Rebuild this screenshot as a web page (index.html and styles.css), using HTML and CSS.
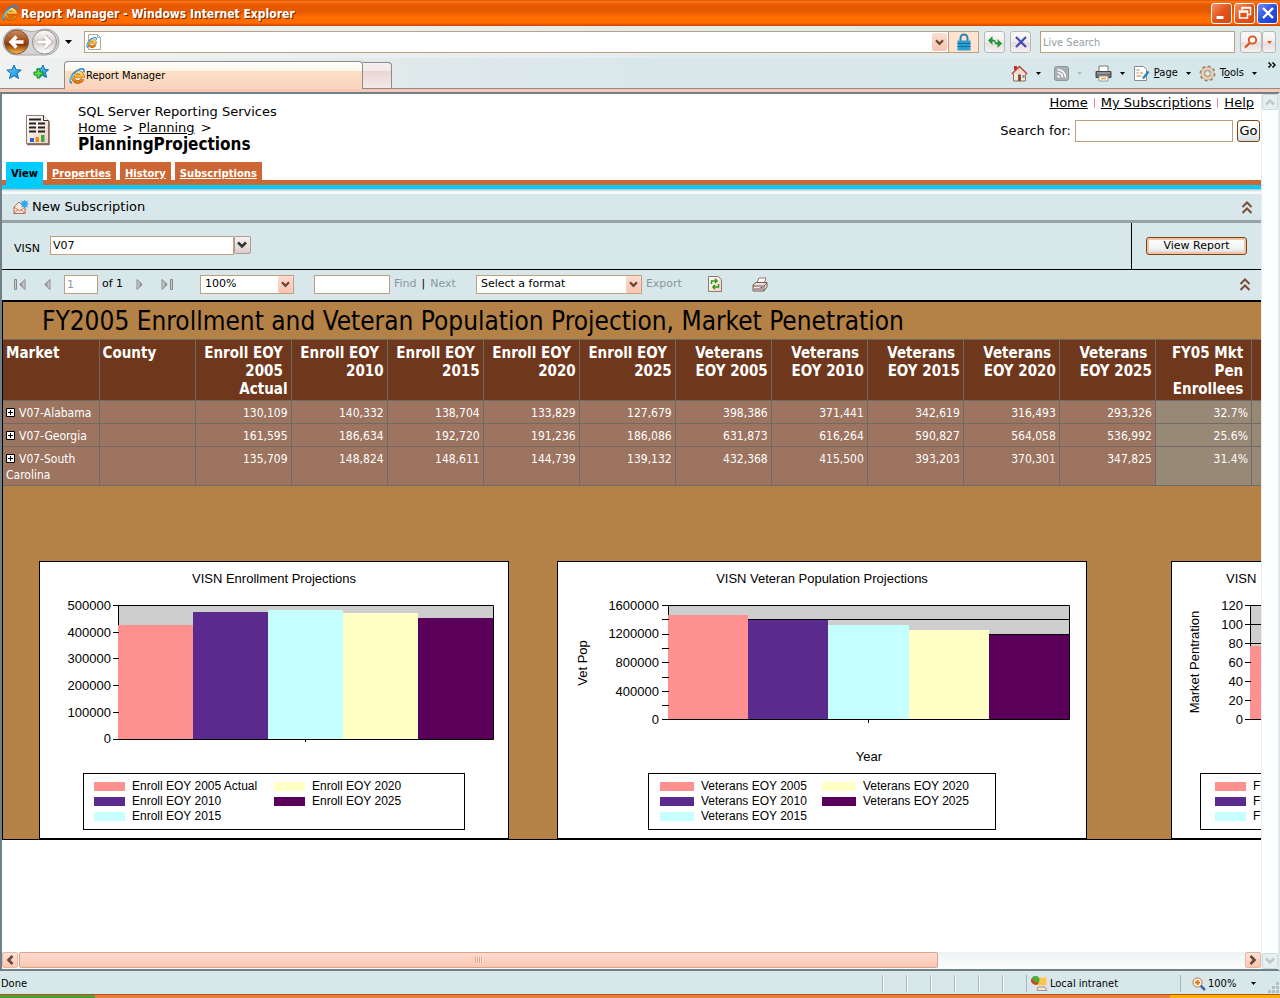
FILE: index.html
```html
<!DOCTYPE html>
<html lang="en">
<head>
<meta charset="utf-8">
<title>Report Manager - Windows Internet Explorer</title>
<link rel="stylesheet" href="styles.css">
</head>
<body>
<svg class="defs" aria-hidden="true">
  <defs>
    <linearGradient id="amber" x1="0" y1="0" x2="0" y2="1"><stop offset="0" stop-color="#ffe08a"/><stop offset=".5" stop-color="#f9a825"/><stop offset="1" stop-color="#d87808"/></linearGradient>
    <linearGradient id="backfill" x1="0" y1="0" x2="0" y2="1"><stop offset="0" stop-color="#c98a62"/><stop offset=".45" stop-color="#a2501c"/><stop offset=".6" stop-color="#8a3706"/><stop offset="1" stop-color="#ffc14a"/></linearGradient>
    <linearGradient id="fwdfill" x1="0" y1="0" x2="0" y2="1"><stop offset="0" stop-color="#fdfdfd"/><stop offset=".5" stop-color="#d9cfcb"/><stop offset="1" stop-color="#ffffff"/></linearGradient>
    <linearGradient id="blue" x1="0" y1="0" x2="1" y2="1"><stop offset="0" stop-color="#6fd4ff"/><stop offset="1" stop-color="#0a84d8"/></linearGradient>
    <linearGradient id="paper" x1="0" y1="0" x2="1" y2="1"><stop offset="0" stop-color="#ffffff"/><stop offset="1" stop-color="#f0cfc0"/></linearGradient>
    <linearGradient id="metal" x1="0" y1="0" x2="1" y2="0"><stop offset="0" stop-color="#777"/><stop offset="1" stop-color="#e2e2e2"/></linearGradient>
    <symbol id="ie" viewBox="0 0 16 16">
      <path d="M13.600 11A5 5 0 1 1 13.800 7.800H6" fill="none" stroke="#9a5200" stroke-width="3.400"/>
      <path d="M13.600 11A5 5 0 1 1 13.800 7.800H6" fill="none" stroke="url(#amber)" stroke-width="2.600"/>
      <path d="M3 15C.2 14.600.8 10.200 4.400 6 8 1.800 12.800-.2 14.500 1.300c.7.7.6 1.800.2 3" fill="none" stroke="#1f8fdc" stroke-width="1.700"/>
      <path d="M1.600 13C1.400 10.800 3 8 5 5.800" fill="none" stroke="#7fd6ff" stroke-width="1"/>
    </symbol>
    <symbol id="caret" viewBox="0 0 7 4"><path d="M0 0h7L3.500 4z"/></symbol>
    <symbol id="chev" viewBox="0 0 10 8"><path d="M1 1.500l4 4 4-4" fill="none" stroke="currentColor" stroke-width="2.600"/></symbol>
    <symbol id="dblup" viewBox="0 0 12 13"><path d="M1.500 6L6 1.500 10.500 6M1.500 12L6 7.500 10.500 12" fill="none" stroke="#7a4b35" stroke-width="2"/></symbol>
    <symbol id="tri" viewBox="0 0 7 11"><path d="M6 .5v10L.8 5.500z" fill="url(#metal)" stroke="#888"/></symbol>
    <symbol id="plus" viewBox="0 0 9 9"><path d="M.5.5h8v8h-8z" fill="#fff" stroke="#000"/><path d="M2 4.500h5M4.500 2v5" stroke="#000"/></symbol>
  </defs>
</svg>

<header class="titlebar">
  <svg class="i16"><use href="#ie"/></svg>
  <h1>Report Manager - Windows Internet Explorer</h1>
  <button class="win" aria-label="Minimize"><svg viewBox="0 0 20 20"><path d="M4.500 14.500h7" stroke="#fff" stroke-width="3"/></svg></button>
  <button class="win" aria-label="Restore"><svg viewBox="0 0 20 20"><path d="M7 7V4.500h8.500v7H13M4.500 8h8v7h-8zM4.500 9h8M7 5h8" fill="none" stroke="#fff" stroke-width="1.500"/></svg></button>
  <button class="win close" aria-label="Close"><svg viewBox="0 0 20 20"><path d="M5 5l10 10M15 5L5 15" stroke="#fff" stroke-width="2.400"/></svg></button>
</header>

<nav class="navbar">
  <button class="travel" aria-label="Back and forward">
    <svg width="58" height="28" viewBox="0 0 58 28">
      <path d="M14 1C22 1 24 3.500 30 3.500S38 1 44 1a13 13 0 0 1 0 26H14A13 13 0 0 1 14 1z" fill="#d3d3d3" stroke="#a9a9a9"/>
      <circle cx="14.500" cy="14" r="12" fill="url(#backfill)" stroke="#7c5a44"/>
      <path d="M21.500 14H9.500M14.500 8.500L9 14l5.500 5.500" fill="none" stroke="#fff" stroke-width="3.400"/>
      <circle cx="42.500" cy="14" r="12" fill="url(#fwdfill)" stroke="#8f8f8f"/>
      <path d="M35.500 14h12M42.500 8.500L48 14l-5.500 5.500" fill="none" stroke="#b5aaa6" stroke-width="4.600"/>
      <path d="M35.500 14h12M42.500 8.500L48 14l-5.500 5.500" fill="none" stroke="#fff" stroke-width="3"/>
    </svg>
  </button>
  <button class="bare" aria-label="Recent pages"><svg class="caret"><use href="#caret"/></svg></button>
  <div class="address">
    <svg class="i18" viewBox="0 0 18 18"><path d="M3.500 1.500h9l3 3v12h-12z" fill="#fff" stroke="#aaa"/><path d="M12.500 1.500v3h3" fill="none" stroke="#aaa"/><svg x="1" y="4" width="11" height="11"><use href="#ie"/></svg></svg>
    <input type="text" aria-label="Address">
    <button class="drop" aria-label="Show address list"><svg class="chev"><use href="#chev"/></svg></button>
    <button class="lock" aria-label="Security report"><svg width="14" height="18" viewBox="0 0 14 18"><path d="M3.500 9V5a3.500 3.500 0 0 1 7 0v4" fill="none" stroke="#2b83ad" stroke-width="2"/><path d="M.5 7.500h13v10H.5z" fill="#2a9fd2"/><path d="M.5 10.500h13M.5 13.500h13" stroke="#1570a0"/></svg></button>
  </div>
  <button class="sq" aria-label="Refresh"><svg width="16" height="14" viewBox="0 0 16 14"><path d="M4 5.500h2.500c1 0 1.300.5 1.300 1.500M12 8.500H9.800c-1 0-1.300-.5-1.300-1.500" fill="none" stroke="#22963a" stroke-width="2"/><path d="M1 5.500L5.500 1v9zM15 8.500L10.500 13V4z" fill="#22963a"/></svg></button>
  <button class="sq" aria-label="Stop"><svg width="12" height="12" viewBox="0 0 12 12"><path d="M1 1l10 10M11 1L1 11" stroke="#4149bb" stroke-width="2.200"/></svg></button>
  <input class="live" type="text" placeholder="Live Search" aria-label="Live Search">
  <div class="go-pair">
    <button class="sq" aria-label="Search"><svg width="14" height="14" viewBox="0 0 14 14"><circle cx="8.500" cy="5" r="3.700" fill="#fff" stroke="#dc5316" stroke-width="1.800"/><path d="M5.700 8L1 12.500" stroke="#dc5316" stroke-width="2.200"/></svg></button>
    <button class="sq slim" aria-label="Search options"><svg class="caret sm orange"><use href="#caret"/></svg></button>
  </div>
</nav>

<div class="tabsbar">
  <div class="favs">
    <button class="bare" aria-label="Favorites"><svg width="16" height="16" viewBox="0 0 16 16"><path d="M8 1l2 4.700 5.200.4-4 3.400 1.300 5L8 11.800l-4.500 2.700 1.300-5-4-3.400L6 5.700z" fill="url(#blue)" stroke="#0e70b8"/></svg></button>
    <button class="bare" aria-label="Add to favorites"><svg width="16" height="16" viewBox="0 0 16 16"><path d="M10 1l1.500 4.200 4 .5-3 3 1 4.800-4-2L5 13l1-5-2.500-3 4.500-.2z" fill="url(#blue)" stroke="#0e70b8"/><path d="M4 5h3v3h3v3H7v3H4v-3H1V8h3z" fill="#5fdc4f" stroke="#128a1c"/></svg></button>
  </div>
  <button class="tab"><svg class="i16"><use href="#ie"/></svg>Report Manager</button>
  <button class="newtab" aria-label="New tab"></button>
  <div class="commands">
    <button class="bare" aria-label="Home"><svg width="17" height="17" viewBox="0 0 17 17"><path d="M3 1h3v4H3z" fill="#c72b20"/><path d="M2.500 8h12v8h-12z" fill="#f5e8dd" stroke="#8e6e5c"/><path d="M.8 9L8.500 1.500 16.200 9" fill="#f3d9cb" stroke="#b54a3a" stroke-width="1.500"/><path d="M7 9.500h3V16H7z" fill="#8b4b2e"/><path d="M11.500 10h2v3h-2z" fill="#7894a8"/></svg></button>
    <button class="bare" aria-label="Home menu"><svg class="caret sm"><use href="#caret"/></svg></button>
    <button class="bare rss" aria-label="Feeds"><svg width="15" height="15" viewBox="0 0 15 15"><rect x=".5" y=".5" width="14" height="14" rx="2" fill="#a9aeb0" stroke="#8f9698"/><circle cx="4.500" cy="10.500" r="1.300" fill="#fff"/><path d="M3.500 6.500a5 5 0 0 1 5 5M3.500 3.500a8 8 0 0 1 8 8" fill="none" stroke="#fff" stroke-width="1.600"/></svg></button>
    <button class="bare" aria-label="Feeds menu"><svg class="caret sm dim"><use href="#caret"/></svg></button>
    <button class="bare print" aria-label="Print"><svg width="17" height="17" viewBox="0 0 17 17"><path d="M4 1h9v6H4z" fill="#fff" stroke="#777"/><path d="M1 6.500h15v6H1z" fill="#6f6f73" stroke="#454548"/><path d="M2 8h13" stroke="#bbb"/><path d="M4 11h9v5H4z" fill="#fff" stroke="#999"/><path d="M6 13.500h5" stroke="#e9b14b" stroke-width="2"/></svg></button>
    <button class="bare" aria-label="Print menu"><svg class="caret sm"><use href="#caret"/></svg></button>
    <button class="bare cmd"><svg width="17" height="17" viewBox="0 0 17 17"><path d="M1.500 1.500h9l3 3v11h-12z" fill="#fff" stroke="#8a8a8a"/><path d="M3.500 5h3M3.500 8h2M7 8h3M3.500 11h5" stroke="#c0764d"/><path d="M15.500 6.500l-5.500 7" stroke="#2b7fc0" stroke-width="2.200"/></svg><span><u>P</u>age</span><svg class="caret sm"><use href="#caret"/></svg></button>
    <button class="bare cmd"><svg width="17" height="17" viewBox="0 0 17 17"><circle cx="8.500" cy="8.500" r="6.800" fill="none" stroke="#9a7b5e" stroke-width="2.400" stroke-dasharray="2.670 2.670"/><circle cx="8.500" cy="8.500" r="5" fill="#f5ede3" stroke="#a88e74" stroke-width="3.600"/><circle cx="8.500" cy="8.500" r="5" fill="none" stroke="#e6d3bc" stroke-width="2.600"/><circle cx="8.500" cy="8.500" r="2.800" fill="#dfecee" stroke="#a88e74"/></svg><span>T<u>o</u>ols</span><svg class="caret sm"><use href="#caret"/></svg></button>
    <button class="bare more" aria-label="More"><svg width="8" height="6" viewBox="0 0 8 6"><path d="M.5.5L3 3 .5 5.500M4.500.5L7 3 4.500 5.500" fill="none" stroke="#000" stroke-width="1.500"/></svg></button>
  </div>
</div>

<div class="viewport">
  <main class="page">
    <header class="site">
      <svg class="logo" width="26" height="32" viewBox="0 0 26 32"><path d="M1.500 1.500h17l5 5v23h-22z" fill="url(#paper)" stroke="#8d7a70"/><path d="M24 7v23.500H2" fill="none" stroke="#8a6357" stroke-width="1.500"/><path d="M18.500 1.500v5h5" fill="#fff" stroke="#333"/><path d="M4 5.500h12M4 9.500h7M13 9.500h7M4 13.500h7M13 13.500h7M4 17.500h7M13 17.500h7" stroke="#222" stroke-width="1.800"/><path d="M5 24h4v4H5z" fill="#2b5fe0"/><path d="M10.500 23h3.500v5h-3.500z" fill="#e98a12"/><path d="M16 21h3.500v7H16z" fill="#37a83c"/></svg>
      <div class="crumbs">
        <p>SQL Server Reporting Services</p>
        <p><a href="#">Home</a> <span>&gt;</span> <a href="#">Planning</a> <span>&gt;</span></p>
        <h2>PlanningProjections</h2>
      </div>
      <div class="tools">
        <p class="links"><a href="#">Home</a><i></i><a href="#">My Subscriptions</a><i></i><a href="#">Help</a></p>
        <form class="find"><label for="q">Search for:</label><input id="q" type="text"><button type="button" class="push">Go</button></form>
      </div>
    </header>

    <nav class="sections">
      <a class="on" href="#">View</a><a href="#">Properties</a><a href="#">History</a><a href="#">Subscriptions</a>
    </nav>

    <div class="actions">
      <button class="bare sub"><svg width="16" height="16" viewBox="0 0 16 16"><path d="M1 8l5-5 6 5v6.500H1z" fill="#fbe9de" stroke="#b4654a"/><path d="M1 8l5.500 4L12 8M1 14.500l4-4M12 14.500l-4-4" fill="none" stroke="#c07055"/><path d="M11.500.5l1 2 2.500-1-1 2.500 2 1-2 1 1 2.500-2.500-1-1 2-1-2-2.500 1 1-2.500-2-1 2-1-1-2.500 2.500 1z" fill="#31a8ec"/></svg>New Subscription</button>
      <button class="bare" aria-label="Hide header"><svg class="dbl"><use href="#dblup"/></svg></button>
    </div>

    <form class="params">
      <div class="param"><label for="visn">VISN</label><div class="combo"><input id="visn" type="text" value="V07"><button type="button" aria-label="Choose VISN"><svg class="chev"><use href="#chev"/></svg></button></div></div>
      <div class="run"><button type="button" class="push view">View Report</button></div>
    </form>

    <div class="viewer-bar">
      <button class="bare first" aria-label="First page"><svg width="12" height="11" viewBox="0 0 12 11"><path d="M.5.5h2v10h-2z" fill="#ccc" stroke="#888"/><svg x="5" width="7" height="11"><use href="#tri"/></svg></svg></button>
      <button class="bare prev" aria-label="Previous page"><svg width="7" height="11"><use href="#tri"/></svg></button>
      <input class="pg" type="text" value="1" aria-label="Page"><span class="of">of 1</span>
      <button class="bare next" aria-label="Next page"><svg class="flip" width="7" height="11"><use href="#tri"/></svg></button>
      <button class="bare last" aria-label="Last page"><svg class="flip" width="12" height="11" viewBox="0 0 12 11"><path d="M.5.5h2v10h-2z" fill="#ccc" stroke="#888"/><svg x="5" width="7" height="11"><use href="#tri"/></svg></svg></button>
      <span class="sel zoomsel"><select aria-label="Zoom"><option>100%</option></select><b><svg class="chev"><use href="#chev"/></svg></b></span>
      <input class="ft" type="text" aria-label="Find text"><a class="off">Find</a><span class="bar">|</span><a class="off">Next</a>
      <span class="sel format"><select aria-label="Export format"><option>Select a format</option></select><b><svg class="chev"><use href="#chev"/></svg></b></span><a class="off">Export</a>
      <button class="bare reload" aria-label="Refresh report"><svg width="14" height="16" viewBox="0 0 14 16"><path d="M.5.5h10l3 3v12H.5z" fill="url(#paper)" stroke="#8d7a70"/><path d="M3.500 8V5h5M7 2.800L9 5 7 7M10.500 8v3h-5M7 9l-2 2 2 2.200" fill="none" stroke="#2d9a17" stroke-width="1.500"/></svg></button>
      <button class="bare prn" aria-label="Print report"><svg width="16" height="15" viewBox="0 0 16 15"><path d="M5 6l2-5h7l-2 6z" fill="#fff" stroke="#8d7a70"/><path d="M1 8l3-2.500h11V10l-3 4H1z" fill="#f1dfd6" stroke="#6e5a52"/><path d="M1 9h11l3-3M12 9v5M2 12h9" fill="none" stroke="#6e5a52"/><path d="M8.500 10h2v1h-2z" fill="#2b5fe0"/></svg></button>
      <button class="bare hide" aria-label="Hide parameters"><svg class="dbl"><use href="#dblup"/></svg></button>
    </div>

    <section class="report">
      <h3>FY2005 Enrollment and Veteran Population Projection, Market Penetration</h3>
      <table>
        <thead>
          <tr><th class="l">Market</th><th class="l">County</th><th>Enroll EOY&nbsp;<br>2005&nbsp;<br>Actual</th><th>Enroll EOY&nbsp;<br>2010</th><th>Enroll EOY&nbsp;<br>2015</th><th>Enroll EOY&nbsp;<br>2020</th><th>Enroll EOY&nbsp;<br>2025</th><th>Veterans&nbsp;<br>EOY 2005</th><th>Veterans&nbsp;<br>EOY 2010</th><th>Veterans&nbsp;<br>EOY 2015</th><th>Veterans&nbsp;<br>EOY 2020</th><th>Veterans&nbsp;<br>EOY 2025</th><th>FY05 Mkt&nbsp;<br>Pen&nbsp;<br>Enrollees&nbsp;</th><th></th></tr>
        </thead>
        <tbody>
          <tr><td class="l"><svg class="plus"><use href="#plus"/></svg>V07-Alabama</td><td></td><td>130,109</td><td>140,332</td><td>138,704</td><td>133,829</td><td>127,679</td><td>398,386</td><td>371,441</td><td>342,619</td><td>316,493</td><td>293,326</td><td class="pen">32.7%</td><td class="pen"></td></tr>
          <tr><td class="l"><svg class="plus"><use href="#plus"/></svg>V07-Georgia</td><td></td><td>161,595</td><td>186,634</td><td>192,720</td><td>191,236</td><td>186,086</td><td>631,873</td><td>616,264</td><td>590,827</td><td>564,058</td><td>536,992</td><td class="pen">25.6%</td><td class="pen"></td></tr>
          <tr><td class="l"><svg class="plus"><use href="#plus"/></svg>V07-South<br>Carolina</td><td></td><td>135,709</td><td>148,824</td><td>148,611</td><td>144,739</td><td>139,132</td><td>432,368</td><td>415,500</td><td>393,203</td><td>370,301</td><td>347,825</td><td class="pen">31.4%</td><td class="pen"></td></tr>
        </tbody>
      </table>

      <div class="charts">
        <figure class="chart c1">
          <figcaption>VISN Enrollment Projections</figcaption>
          <svg width="468" height="182" viewBox="40 592 468 182">
            <path d="M118.500 605.500h375v134h-375z" fill="#cecece" stroke="#000"/>
            <g><rect x="118" y="625" width="75" height="114" fill="#ff9090"/><rect x="193" y="612" width="75" height="127" fill="#5a2a8e"/><rect x="268" y="610" width="75" height="129" fill="#c6ffff"/><rect x="343" y="613" width="75" height="126" fill="#ffffc6"/><rect x="418" y="618" width="75" height="121" fill="#5a005a"/></g>
            <path d="M113 605.500h6M113 632.500h6M113 658.500h6M113 685.500h6M113 712.500h6M113 739.500h6M305.500 739v3" stroke="#000"/>
            <g text-anchor="end"><text x="111" y="610">500000</text><text x="111" y="637">400000</text><text x="111" y="663">300000</text><text x="111" y="690">200000</text><text x="111" y="717">100000</text><text x="111" y="743">0</text></g>
          </svg>
          <ul class="legend"><li class="k1">Enroll EOY 2005 Actual</li><li class="k2">Enroll EOY 2010</li><li class="k3">Enroll EOY 2015</li><li class="k4">Enroll EOY 2020</li><li class="k5">Enroll EOY 2025</li></ul>
        </figure>
        <figure class="chart c2">
          <figcaption>VISN Veteran Population Projections</figcaption>
          <svg width="528" height="182" viewBox="558 592 528 182">
            <path d="M668.500 605.500h401v114h-401z" fill="#cecece" stroke="#000"/>
            <path d="M669 619.500h400M669 634.500h400" stroke="#000"/>
            <g><rect x="668" y="615" width="80" height="104" fill="#ff9090"/><rect x="748" y="620" width="80" height="99" fill="#5a2a8e"/><rect x="828" y="625" width="81" height="94" fill="#c6ffff"/><rect x="909" y="630" width="80" height="89" fill="#ffffc6"/><rect x="989" y="635" width="80" height="84" fill="#5a005a"/></g>
            <path d="M662 605.500h7M662 619.500h7M662 634.500h7M662 648.500h7M662 662.500h7M662 677.500h7M662 691.500h7M662 705.500h7M662 719.500h7M868.500 719v4" stroke="#000"/>
            <g text-anchor="end"><text x="659" y="610">1600000</text><text x="659" y="638">1200000</text><text x="659" y="667">800000</text><text x="659" y="696">400000</text><text x="659" y="724">0</text></g>
            <g text-anchor="middle"><text x="869" y="761">Year</text><text transform="translate(587 663) rotate(-90)">Vet Pop</text></g>
          </svg>
          <ul class="legend"><li class="k1">Veterans EOY 2005</li><li class="k2">Veterans EOY 2010</li><li class="k3">Veterans EOY 2015</li><li class="k4">Veterans EOY 2020</li><li class="k5">Veterans EOY 2025</li></ul>
        </figure>
        <figure class="chart c3">
          <figcaption>VISN</figcaption>
          <svg width="468" height="182" viewBox="1172 592 468 182">
            <path d="M1250.500 605.500h375v114h-375z" fill="#cecece" stroke="#000"/>
            <path d="M1251 624.500h374M1251 643.500h374" stroke="#000"/>
            <rect x="1250" y="646" width="75" height="73" fill="#ff9090"/>
            <path d="M1245 605.500h6M1245 624.500h6M1245 643.500h6M1245 662.500h6M1245 681.500h6M1245 700.500h6M1245 719.500h6" stroke="#000"/>
            <g text-anchor="end"><text x="1243" y="610">120</text><text x="1243" y="629">100</text><text x="1243" y="648">80</text><text x="1243" y="667">60</text><text x="1243" y="686">40</text><text x="1243" y="705">20</text><text x="1243" y="724">0</text></g>
            <text text-anchor="middle" transform="translate(1199 662) rotate(-90)">Market Pentration</text>
          </svg>
          <ul class="legend"><li class="k1">FY</li><li class="k2">FY</li><li class="k3">FY</li></ul>
        </figure>
      </div>
    </section>
  </main>

  <div class="vscroll"><span class="sb off"><svg class="chev up"><use href="#chev"/></svg></span><span class="sb off"><svg class="chev"><use href="#chev"/></svg></span></div>
  <div class="hscroll"><span class="sb"><svg class="chev left"><use href="#chev"/></svg></span><span class="thumb"><i></i></span><span class="sb"><svg class="chev right"><use href="#chev"/></svg></span></div>
</div>

<footer class="status">
  <span class="done">Done</span>
  <i class="cell"></i><i class="cell"></i><i class="cell"></i><i class="cell"></i><i class="cell"></i><i class="cell"></i>
  <span class="zone"><svg width="17" height="17" viewBox="0 0 17 17"><path d="M5 2h11v9H5z" fill="#f7c64a" stroke="#e9dfd8" stroke-width="1.500"/><circle cx="4.500" cy="5" r="4" fill="#4bae3b"/><path d="M1 4a4 4 0 0 0 6 4" fill="none" stroke="#d34a1c" stroke-width="2.500"/><path d="M7 12h7l2 3.500H6z" fill="#efe3df" stroke="#a5938d"/></svg>Local intranet</span>
  <span class="mag"><svg width="14" height="14" viewBox="0 0 14 14"><path d="M8 8l5 5" stroke="#3c6aa8" stroke-width="2.600"/><circle cx="5.500" cy="5.500" r="4.600" fill="#fff1df" stroke="#a9755a"/><path d="M3 5.500h5M5.500 3v5" stroke="#e27a12" stroke-width="2"/></svg>100%<svg class="caret sm"><use href="#caret"/></svg></span>
  <svg class="grip" width="12" height="12" viewBox="0 0 12 12"><path d="M8 0h3v3H8zM4 4h3v3H4zM8 4h3v3H8zM0 8h3v3H0zM4 8h3v3H4zM8 8h3v3H8z" fill="#b4bfc2"/></svg>
</footer>
<div class="taskbar"><i class="start"></i><i class="apps"></i><i class="tray"></i></div>
</body>
</html>
```
FILE: styles.css
```css
* { box-sizing: border-box; }
body {
  margin: 0;
  height: 100vh;
  display: flex;
  flex-direction: column;
  overflow: hidden;
  background: #dcebec;
  color: #000;
  font: 11px/14px "DejaVu Sans Condensed", "Open Sans", sans-serif;
}
button, input, select { font: inherit; color: inherit; margin: 0; border-radius: 0; }
button { padding: 0; display: flex; align-items: center; justify-content: center; flex: none; }
input { border: 1px solid #bf9f7d; background: #fff; padding: 0 2px; min-width: 0; }
svg { display: block; flex: none; }
p, h1, h2, h3, figure, ul { margin: 0; padding: 0; }
a { color: inherit; }
.defs { position: absolute; width: 0; height: 0; }
.i16 { width: 16px; height: 16px; }
.i18 { width: 18px; height: 18px; }
.bare { border: 0; background: none; }
.caret { width: 7px; height: 4px; }
.caret.sm { width: 5px; height: 3px; }
.caret.orange { fill: #e85a10; }
.caret.dim { fill: #b3bec1; }
.chev { width: 10px; height: 8px; color: #6f4434; }

.titlebar {
  height: 26px;
  flex: none;
  display: flex;
  align-items: center;
  gap: 2px;
  padding: 0 2px;
  background: linear-gradient(#e04c00, #fa7814 6%, #e55800 18%, #e85a00 45%, #ff6c00 65%, #ff6c00 88%, #c84400);
}
.titlebar h1 {
  flex: 1;
  padding: 1px 0 0 1px;
  color: #fff;
  font-size: 12px;
  text-shadow: 1px 1px #7a2a00;
}
.win {
  width: 21px;
  height: 21px;
  border: 1px solid #fff;
  border-radius: 3px;
  background: linear-gradient(135deg, #f39068, #e2531c 50%, #d8480f);
}
.win svg { width: 20px; height: 20px; }
.win.close { background: linear-gradient(135deg, #6f8ff5, #2a50e0 50%, #1c3cc4); }

.navbar {
  height: 32px;
  flex: none;
  display: flex;
  align-items: center;
  gap: 5px;
  padding: 0 4px 0 2px;
  background: linear-gradient(90deg, #f3f3f2, #e4eced 50%, #dbe9eb);
}
.travel { border: 0; background: none; }
.address {
  flex: 1;
  display: flex;
  align-items: center;
  height: 22px;
  margin-left: 7px;
  border: 1px solid #bf9f7d;
  background: #fff;
}
.address input { flex: 1; border: 0; height: 18px; }
.drop, .sel b {
  width: 15px;
  height: 18px;
  border: 0;
  border-radius: 2px;
  background: linear-gradient(#fbdccf, #f9c4b0);
}
.drop .chev, .sel .chev { width: 9px; height: 7px; }
.lock { width: 30px; height: 20px; border: 0; border-left: 1px solid #bf9f7d; margin-left: 1px; background: #fde3d0; }
.sq {
  width: 21px;
  height: 22px;
  border: 1px solid #bcb8b8;
  border-radius: 3px;
  background: linear-gradient(#fafafa, #f1eded 50%, #e6dcdb 55%, #f5f2f2);
}
.live { width: 195px; height: 22px; margin-left: 4px; }
.live::placeholder { color: #94a0a4; opacity: 1; }
.go-pair { display: flex; }
.go-pair .slim { width: 14px; }
.go-pair .sq:first-child { width: 22px; }

.tabsbar {
  height: 31px;
  flex: none;
  display: flex;
  align-items: flex-end;
  padding-top: 3px;
  background: linear-gradient(90deg, #f0f1f1, #dce8ea 40%, #d5e7ea);
  border-bottom: 1px solid #8f8b8b;
}
.favs { width: 64px; height: 26px; display: flex; gap: 11px; padding: 0 0 7px 6px; align-items: center; }
.tab {
  width: 299px;
  height: 28px;
  margin-bottom: -1px;
  gap: 1px;
  justify-content: flex-start;
  padding: 0 4px;
  border: 1px solid #8f8b8b;
  border-bottom: 0;
  border-radius: 4px 4px 0 0;
  background: linear-gradient(#fff, #fdf6ea 32%, #fbe0c4 34%, #fad3bd);
}
.newtab {
  width: 29px;
  height: 26px;
  border: 1px solid #8f8b8b;
  border-left: 0;
  border-bottom: 0;
  border-radius: 0 4px 0 0;
  background: linear-gradient(#f6f0f0, #f3e9e9 30%, #ead6d3 34%, #f5eae9);
}
.commands { margin-left: auto; display: flex; align-items: center; height: 30px; gap: 8px; padding-right: 4px; }
.cmd { gap: 4px; }
.cmd .caret { margin-left: 4px; }
.rss, .print { margin-left: 5px; }
.more { align-self: flex-start; padding-top: 4px; margin-left: 3px; }

.viewport {
  flex: 1;
  min-height: 0;
  display: grid;
  grid-template: minmax(0, 1fr) 17px / minmax(0, 1fr) 17px;
  border: 2px solid #6f8088;
  border-right-color: #dfe9eb;
  margin-top: 3px;
  box-shadow: 0 -3px #fbc8b6;
  background: #fff;
}
.page { overflow: hidden; font-family: "DejaVu Sans", sans-serif; }
.site { display: flex; height: 68px; padding: 0 1px 0 23px; font-size: 13px; line-height: 16px; }
.logo { margin-top: 20px; }
.crumbs { margin-left: 27px; padding-top: 10px; flex: 1; white-space: nowrap; }
.crumbs span { margin: 0 1px 0 2px; }
.crumbs h2 { font: bold 17px/17px "DejaVu Sans Condensed", sans-serif; }
.tools { display: flex; flex-direction: column; align-items: flex-end; }
.links { display: flex; align-items: center; padding: 1px 6px 0 0; }
.links i { width: 1px; height: 10px; margin: 0 6px; background: #e07fb0; }
.find { display: flex; align-items: center; margin-top: 9px; gap: 4px; }
.find input { width: 158px; height: 22px; }
.push {
  height: 22px;
  padding: 0 3px;
  border: 1px solid #7a4312;
  border-radius: 3px;
  background: linear-gradient(#fff, #f1f4f4 60%, #d4dcde);
}
.find .push { width: 23px; }

.sections {
  display: flex;
  gap: 4px;
  padding-left: 4px;
  height: 32px;
  align-items: flex-start;
  font: bold 10px/14px "DejaVu Sans", sans-serif;
  background: linear-gradient(transparent 18px, #c63 18px, #c63 23px, #0cf 23px, #0cf 27px, #b5bcbe 27px, #e4ecee 29px, #f8fbfb 30px);
}
.sections a { height: 18px; padding: 5px 5px 0; color: #fff; background: #c63; }
.sections .on { height: 24px; color: #000; background: #0cf; text-decoration: none; }

.actions {
  display: flex;
  justify-content: space-between;
  align-items: center;
  height: 29px;
  padding: 0 8px 0 11px;
  background: #d8e8ea;
  border-bottom: 3px solid #97a3a5;
}
.sub { font-size: 13px; gap: 3px; }
.dbl { width: 12px; height: 13px; }
.params { display: flex; min-height: 47px; background: #d8e8ea; border-bottom: 1px solid #000; }
.param { flex: 1; display: flex; align-items: flex-start; gap: 10px; padding: 13px 12px 0; }
.param label { padding-top: 6px; }
.combo { display: flex; }
.combo input { width: 184px; height: 19px; }
.combo button { width: 17px; height: 18px; border: 1px solid #a99; border-radius: 2px; background: linear-gradient(#f5f2f2, #dccfce); }
.combo .chev { color: #333; }
.run { width: 130px; border-left: 1px solid #000; padding: 14px; }
.view { width: 101px; height: 18px; box-shadow: inset 0 0 0 2px #f6c3a6; }

.viewer-bar { display: flex; align-items: center; height: 30px; padding: 0 10px 2px 12px; background: #d8e8ea; }
.pg { width: 34px; height: 19px; margin-left: 13px; }
.pg, .off { color: #8b979c; }
.of { margin-left: 4px; width: 34px; white-space: nowrap; }
.prev { margin-left: 18px; }
.last { margin-left: 18px; }
.flip { transform: scaleX(-1); }
.sel { position: relative; display: block; height: 19px; }
.sel select { appearance: none; width: 100%; height: 19px; border: 1px solid #bf9f7d; background: #fff; padding: 0 4px; }
.sel b { position: absolute; right: 1px; top: 1px; height: 17px; display: flex; align-items: center; justify-content: center; pointer-events: none; }
.zoomsel { width: 94px; margin-left: 27px; }
.format { width: 166px; margin: 0 4px 0 20px; }
.ft { width: 76px; height: 19px; margin: 0 4px 0 20px; }
.bar { margin: 0 5px; }
.reload { margin-left: 26px; }
.prn { margin-left: 30px; }
.hide { margin-left: auto; }

.report { border: solid #000; border-width: 2px 0 1px 1px; background: #b48246; }
.report h3 { padding: 3px 0 0 39px; height: 37px; font: 26px/32px "DejaVu Sans Condensed", sans-serif; white-space: nowrap; }
table {
  table-layout: fixed;
  width: 1345px;
  border-collapse: collapse;
  color: #fff;
  font: 12px/16px "DejaVu Sans Condensed", sans-serif;
}
th, td { width: 96px; border: 1px solid #6f6a66; border-left-width: 0; vertical-align: top; text-align: right; }
th { height: 61px; padding: 4px 3px 2px; font-size: 15px; line-height: 18px; background: #6f381c; white-space: nowrap; }
td { height: 23px; padding: 4px 3px 2px; background: #9c7460; white-space: nowrap; }
.l { text-align: left; }
.pen { background: #988876; }
.plus { width: 9px; height: 9px; display: inline-block; margin-right: 4px; }

.charts { display: flex; align-items: stretch; padding: 75px 0 0 36px; }
.chart { flex: none; border: 1px solid #000; background: #fff; font: 12px/15px "Liberation Sans", Arial, sans-serif; padding-bottom: 8px; }
.chart text { font-size: 13px; }
.chart figcaption { padding: 9px 0 6px; text-align: center; font-size: 13px; }
.c1 { width: 470px; }
.c2 { width: 530px; margin-left: 48px; }
.c3 { width: 470px; margin-left: 84px; }
.c3 figcaption { padding-left: 54px; text-align: left; }
.legend {
  list-style: none;
  display: grid;
  grid-template-rows: repeat(3, 15px);
  grid-auto-flow: column;
  grid-template-columns: 180px 1fr;
  margin: -1px 43px 0;
  padding: 5px 10px;
  border: 1px solid #000;
}
.legend li { display: flex; align-items: center; gap: 7px; white-space: nowrap; }
.legend li::before { content: ""; width: 31px; height: 9px; }
.c2 .legend { grid-template-columns: 162px 1fr; margin: -1px 90px 0; padding-left: 11px; }
.c2 .legend li::before { width: 34px; }
.c3 .legend { margin: -1px 28px 0; padding-left: 14px; }
.k1::before { background: #ff9090; }
.k2::before { background: #5a2a8e; }
.k3::before { background: #c6ffff; }
.k4::before { background: #ffffc6; }
.k5::before { background: #5a005a; }

.vscroll { display: flex; flex-direction: column; justify-content: space-between; grid-row: 1 / 3; grid-column: 2; background: #fbffff; border-left: 1px solid #e6eeee; }
.hscroll { display: flex; grid-row: 2; background: linear-gradient(#eef2f2, #fcfefe); }
.sb {
  width: 16px;
  height: 16px;
  display: flex;
  align-items: center;
  justify-content: center;
  border: 1px solid #e8b7a0;
  border-radius: 2px;
  background: linear-gradient(#fde3d8, #fac5b0);
}
.sb.off { background: #e6f0f0; border-color: #cddcdd; }
.sb.off .chev { color: #bccaca; }
.up { transform: rotate(180deg); }
.left { transform: rotate(90deg); }
.right { transform: rotate(-90deg); }
.thumb {
  width: 73%;
  height: 16px;
  margin: 0 auto 0 1px;
  display: flex;
  align-items: center;
  justify-content: center;
  border: 1px solid #dba385;
  border-radius: 2px;
  background: linear-gradient(#fddace, #fac8b4);
}
.thumb i { width: 8px; height: 6px; background: repeating-linear-gradient(90deg, #e6a58b 0 1px, #fde3d8 1px 2px); }

.status { height: 23px; flex: none; display: flex; align-items: center; padding-top: 2px; background: #d8e8ea; }
.done { flex: 1; padding-left: 1px; }
.cell { width: 24px; height: 17px; border-left: 1px solid #aab6b8; box-shadow: inset 1px 0 #fff; }
.zone { width: 154px; height: 17px; display: flex; align-items: center; gap: 2px; padding-left: 4px; border-left: 1px solid #aab6b8; }
.mag { width: 88px; height: 17px; display: flex; align-items: center; gap: 2px; padding-left: 11px; border-left: 1px solid #aab6b8; }
.mag .caret { margin-left: auto; margin-right: 12px; }
.grip { align-self: flex-end; }
.taskbar { height: 4px; flex: none; display: flex; border-top: 1px solid #c04a10; }
.start { width: 95px; background: #4ba03a; }
.apps { flex: 1; background: #e5813c; }
.tray { width: 110px; background: #f7b400; }
```
